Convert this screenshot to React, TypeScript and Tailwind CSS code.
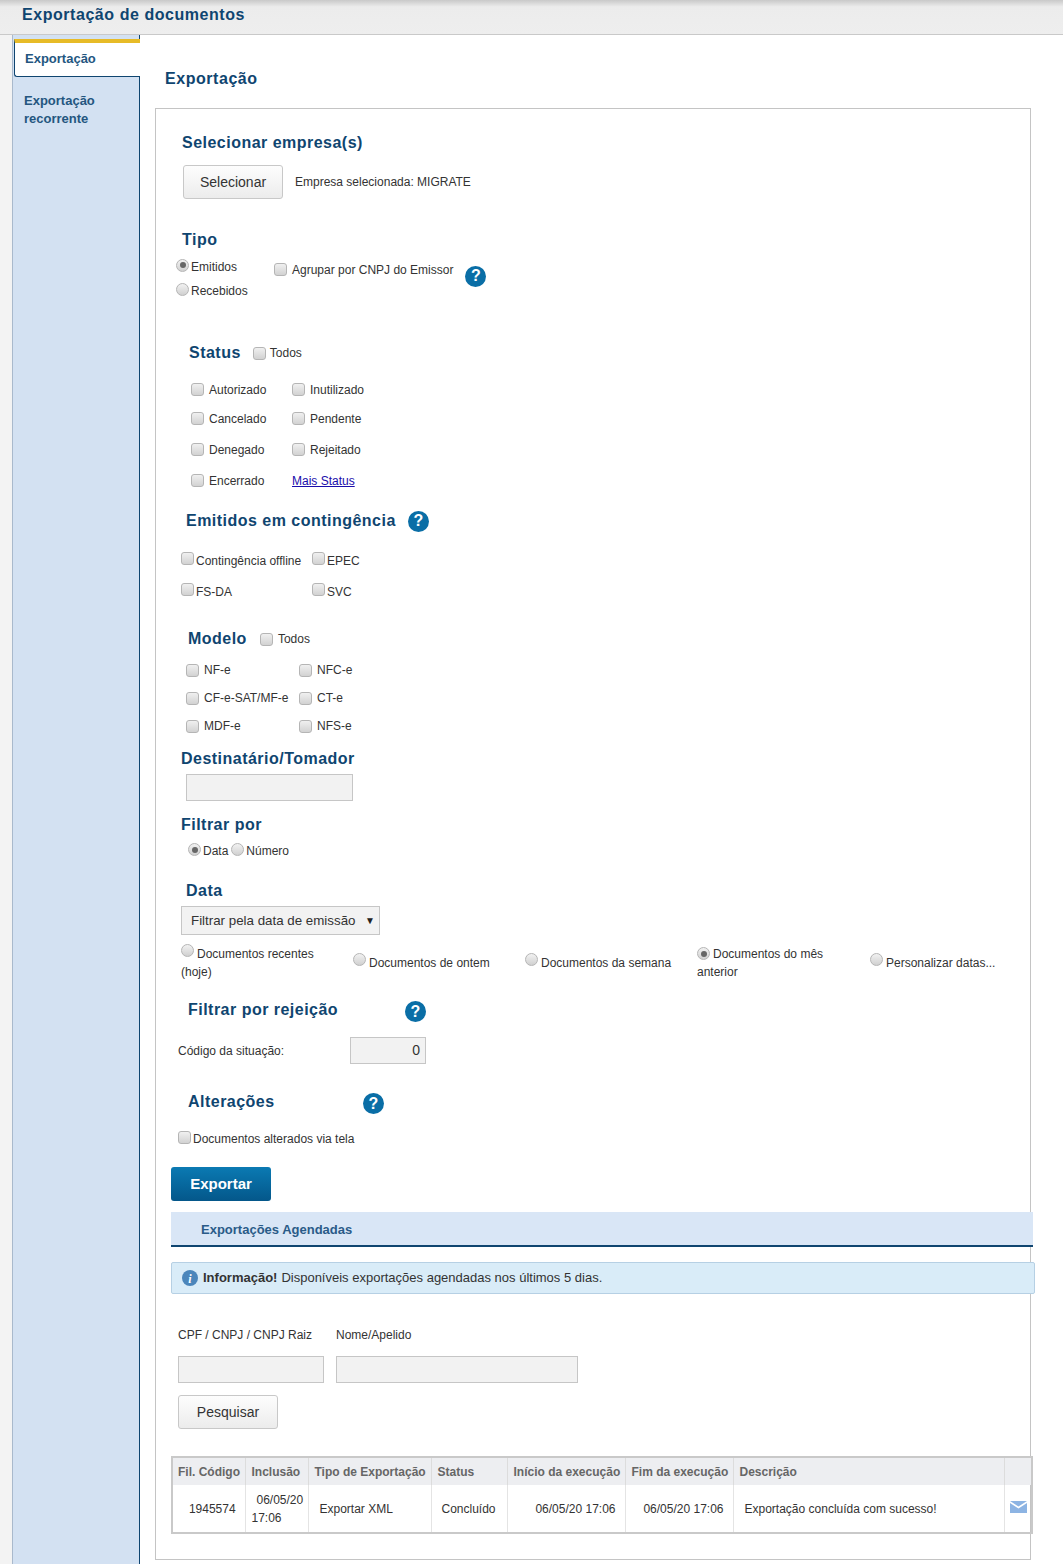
import type { ReactNode } from "react";

const FONT = "font-['Liberation_Sans',Arial,sans-serif]";

function Heading({ children, className = "" }: { children: ReactNode; className?: string }) {
  return <h2 className={`text-[16px] leading-[24px] font-bold tracking-[0.48px] text-[#0f4570] ${className}`}>{children}</h2>;
}

function Check({ className = "" }: { className?: string }) {
  return (
    <input
      type="checkbox"
      className={`appearance-none shrink-0 w-[13px] h-[13px] rounded-[3px] border border-[#b5b5b5] bg-gradient-to-b from-[#f0f0f0] to-[#d2d2d2] ${className}`}
    />
  );
}

function Radio({ checked = false, className = "" }: { checked?: boolean; className?: string }) {
  return (
    <span className={`inline-flex items-center justify-center shrink-0 w-[13px] h-[13px] rounded-full border border-[#b5b5b5] bg-gradient-to-b from-[#f2f2f2] to-[#d0d0d0] ${className}`}>
      {checked && <span className="w-[6px] h-[6px] rounded-full bg-[#666]" />}
    </span>
  );
}

function Help({ className = "" }: { className?: string }) {
  return (
    <span className={`flex items-center justify-center w-[21px] h-[21px] rounded-full bg-[#0a6ea6] text-white text-[16px] font-bold leading-none ${className}`}>?</span>
  );
}

function GrayButton({ children, className = "" }: { children: ReactNode; className?: string }) {
  return (
    <button className={`w-[100px] h-[34px] rounded-[3px] border border-[#c8c8c8] bg-gradient-to-b from-[#fdfdfd] to-[#ececec] text-[14px] text-[#333] ${className}`}>
      {children}
    </button>
  );
}

function TextBox({ className = "" }: { className?: string }) {
  return <div className={`h-[27px] border border-[#c6c6c6] bg-[#f2f2f2] ${className}`} />;
}

// one line of a two column checkbox list
function CheckRow({ h, a, b, second }: { h: string; a: string; b?: string; second?: ReactNode }) {
  return (
    <div className={`flex items-center ${h}`}>
      <div className="flex items-center w-[101px]">
        <Check />
        <span className="ml-[5px]">{a}</span>
      </div>
      {second ?? (
        <div className="flex items-center">
          <Check />
          <span className="ml-[5px]">{b}</span>
        </div>
      )}
    </div>
  );
}

function ModelRow({ a, b }: { a: string; b: string }) {
  return (
    <div className="flex items-center h-[28px] pl-[30px]">
      <div className="flex items-center w-[113px]">
        <Check />
        <span className="ml-[5px]">{a}</span>
      </div>
      <Check />
      <span className="ml-[5px]">{b}</span>
    </div>
  );
}

function ContRow({ a, b, h }: { a: string; b: string; h: string }) {
  return (
    <div className={`flex items-center pl-[25px] ${h}`}>
      <div className="flex items-center w-[131px]">
        <Check className="-mt-[5px]" />
        <span className="ml-[2px]">{a}</span>
      </div>
      <Check className="-mt-[5px]" />
      <span className="ml-[2px]">{b}</span>
    </div>
  );
}

const dateOptions = [
  { text: "Documentos recentes (hoje)", checked: false },
  { text: "Documentos de ontem", checked: false },
  { text: "Documentos da semana", checked: false },
  { text: "Documentos do mês anterior", checked: true },
  { text: "Personalizar datas...", checked: false },
];

const columns = [
  { label: "Fil. Código", w: "w-[73px]" },
  { label: "Inclusão", w: "w-[63px]" },
  { label: "Tipo de Exportação", w: "w-[123px]" },
  { label: "Status", w: "w-[76px]" },
  { label: "Início da execução", w: "w-[118px]" },
  { label: "Fim da execução", w: "w-[108px]" },
  { label: "Descrição", w: "w-[271px]" },
  { label: "", w: "" },
];

function SchedulesTable() {
  return (
    <table className="table-fixed border-collapse w-[862px] ml-[15px] mt-[27px] border-2 border-[#c9c9c9] text-[12px] text-[#333]">
      <thead>
        <tr className="h-[28px] bg-[#edeef1] text-[#666]">
          {columns.map((c) => (
            <th key={c.label} className={`${c.w} border-l border-[#dcdcdc] first:border-l-0 first:pl-[5px] pl-[6px] text-left font-bold whitespace-nowrap`}>
              {c.label}
            </th>
          ))}
        </tr>
      </thead>
      <tbody>
        <tr className="h-[48px]">
          <td className="text-center pl-[7px]">1945574</td>
          <td className="border-l border-[#e4e4e4] px-[6px] leading-[18px]">
            <span className="pl-[5px]">06/05/20</span> 17:06
          </td>
          <td className="border-l border-[#e4e4e4] pl-[11px]">Exportar XML</td>
          <td className="border-l border-[#e4e4e4] pl-[10px]">Concluído</td>
          <td className="border-l border-[#e4e4e4] pr-[9px] text-right">06/05/20 17:06</td>
          <td className="border-l border-[#e4e4e4] pr-[9px] text-right">06/05/20 17:06</td>
          <td className="border-l border-[#e4e4e4] pl-[11px]">Exportação concluída com sucesso!</td>
          <td className="border-l border-[#e4e4e4] pl-[5px]">
            <svg viewBox="0 0 17 12" className="w-[17px] h-[12px] -mt-[4px]">
              <path d="M0 0h17L8.5 5.5z" fill="#8db4e3" />
              <path d="M0 2l8.5 5.5L17 2v10H0z" fill="#8db4e3" />
            </svg>
          </td>
        </tr>
      </tbody>
    </table>
  );
}

export default function App() {
  return (
    <div className={`${FONT} w-[1063px] h-[1564px] overflow-hidden bg-white text-[12px] text-[#333]`}>
      <header className="h-[35px] border-b border-[#c9c9c9] bg-gradient-to-b from-[#c9c9c9] via-[#ececec] via-[20%] to-[#eeeeee] pl-[22px] pt-[4px]">
        <h1 className="text-[16px] leading-[22px] font-bold tracking-[0.55px] text-[#0f4570]">Exportação de documentos</h1>
      </header>

      <div className="flex h-[1529px]">
        <div className="w-[12px] bg-[#f3f3f3]" />
        <aside className="w-[128px] bg-[#d3e1f2] border-l border-[#a9b9cc] border-r border-r-[#0f4570] pt-[4px] text-[13px] font-bold text-[#24567f]">
          <div className="ml-px -mr-px h-[38px] bg-white border-t-4 border-t-[#e7bb28] border-l border-b border-[#0f4570] rounded-bl-[3px] pl-[10px] leading-[32px]">Exportação</div>
          <div className="pl-[11px] pt-[15px] leading-[18px] w-[110px]">Exportação recorrente</div>
        </aside>

        <main className="flex-1 pl-[15px]">
          <h2 className="pl-[10px] pt-[32px] text-[16px] leading-[24px] font-bold tracking-[0.55px] text-[#0f4570] h-[73px]">Exportação</h2>

          <section className="w-[876px] h-[1452px] border border-[#c4c4c4] pt-[22px]">
            <Heading className="pl-[26px]">Selecionar empresa(s)</Heading>
            <div className="flex items-center pl-[27px] mt-[10px]">
              <GrayButton>Selecionar</GrayButton>
              <span className="ml-[12px]">Empresa selecionada: MIGRATE</span>
            </div>

            <Heading className="pl-[26px] mt-[29px]">Tipo</Heading>
            <div className="relative h-[88px] pl-[20px] pt-[3px]">
              <div className="flex items-center h-[24px]">
                <Radio checked className="-mt-[4px]" />
                <span className="ml-[2px]">Emitidos</span>
                <Check className="ml-[37px] mt-[5px]" />
                <span className="ml-[5px] mt-[5px]">Agrupar por CNPJ do Emissor</span>
                <Help className="ml-[12px] mt-[18px]" />
              </div>
              <div className="flex items-center h-[24px]">
                <Radio className="-mt-[4px]" />
                <span className="ml-[2px]">Recebidos</span>
              </div>
            </div>

            <div className="flex items-center pl-[33px] h-[24px] mt-[1px]">
              <Heading>Status</Heading>
              <Check className="ml-[12px]" />
              <span className="ml-[4px]">Todos</span>
            </div>
            <div className="pl-[35px] mt-[10px]">
              <CheckRow h="h-[29px]" a="Autorizado" b="Inutilizado" />
              <CheckRow h="h-[29px]" a="Cancelado" b="Pendente" />
              <CheckRow h="h-[33px]" a="Denegado" b="Rejeitado" />
              <CheckRow h="h-[29px]" a="Encerrado" second={<a className="text-[#1a0dab] underline">Mais Status</a>} />
            </div>

            <div className="flex items-center pl-[30px] h-[24px] mt-[14px]">
              <Heading>Emitidos em contingência</Heading>
              <Help className="ml-[12px]" />
            </div>
            <div className="mt-[12px]">
              <ContRow h="h-[31px]" a="Contingência offline" b="EPEC" />
              <ContRow h="h-[31px]" a="FS-DA" b="SVC" />
            </div>

            <div className="flex items-center pl-[32px] h-[24px] mt-[20px]">
              <Heading>Modelo</Heading>
              <Check className="ml-[13px]" />
              <span className="ml-[5px]">Todos</span>
            </div>
            <div className="mt-[5px]">
              <ModelRow a="NF-e" b="NFC-e" />
              <ModelRow a="CF-e-SAT/MF-e" b="CT-e" />
              <ModelRow a="MDF-e" b="NFS-e" />
            </div>

            <Heading className="pl-[25px] mt-[7px]">Destinatário/Tomador</Heading>
            <TextBox className="ml-[30px] mt-[3px] w-[167px]" />

            <Heading className="pl-[25px] mt-[12px]">Filtrar por</Heading>
            <div className="flex items-center pl-[32px] h-[20px] mt-[4px]">
              <Radio checked className="-mt-[3px]" />
              <span className="ml-[2px]">Data</span>
              <Radio className="ml-[3px] -mt-[3px]" />
              <span className="ml-[2px]">Número</span>
            </div>

            <Heading className="pl-[30px] mt-[18px]">Data</Heading>
            <div className="relative ml-[25px] mt-[3px] w-[199px] h-[29px] border border-[#c6c6c6] bg-[#f2f2f2] pl-[9px] text-[13.33px] leading-[27px] text-[#333]">
              Filtrar pela data de emissão
              <span className="absolute right-[4px] top-0 text-[10px] text-[#222]">▼</span>
            </div>

            <div className="grid grid-cols-[172px_172px_172px_173px_150px] items-center ml-[25px] mt-[9px] h-[36px] leading-[18px]">
              {dateOptions.map((o) => (
                <div key={o.text} className="pr-[12px]">
                  <Radio checked={o.checked} className="align-[1px] mr-[3px]" />
                  {o.text}
                </div>
              ))}
            </div>

            <div className="flex items-center h-[24px] pl-[32px] mt-[18px]">
              <Heading className="w-[217px]">Filtrar por rejeição</Heading>
              <Help className="mt-[3px]" />
            </div>
            <div className="flex items-center pl-[22px] h-[27px] mt-[15px]">
              <span className="w-[172px]">Código da situação:</span>
              <div className="w-[76px] h-[27px] border border-[#c6c6c6] bg-[#f2f2f2] pr-[5px] text-right leading-[25px] text-[14px]">0</div>
            </div>

            <div className="flex items-center h-[24px] pl-[32px] mt-[26px]">
              <Heading className="w-[175px]">Alterações</Heading>
              <Help className="mt-[3px]" />
            </div>
            <div className="flex items-center pl-[22px] h-[18px] mt-[16px]">
              <Check className="-mt-[3px]" />
              <span className="ml-[2px]">Documentos alterados via tela</span>
            </div>

            <button className="block ml-[15px] mt-[19px] w-[100px] h-[34px] rounded-[3px] bg-gradient-to-b from-[#0b7ab3] to-[#04578a] text-white text-[15px] font-bold">Exportar</button>

            <div className="ml-[15px] mt-[11px] w-[862px] h-[35px] bg-[#d9e6f6] border-b-2 border-[#0f4570] pl-[30px] text-[13px] font-bold leading-[36px] text-[#2a5b88]">Exportações Agendadas</div>

            <div className="flex items-center ml-[15px] mt-[15px] w-[864px] h-[32px] rounded-[2px] border border-[#b6d0e4] bg-[#d9ecf8] pl-[10px] text-[13px] text-[#333]">
              <svg viewBox="0 0 16 16" className="w-[16px] h-[16px] mr-[5px]">
                <circle cx="8" cy="8" r="8" fill="#4b86bb" />
                <text x="8" y="12.5" textAnchor="middle" fontSize="12" fontWeight="700" fontStyle="italic" fontFamily="Liberation Serif" fill="#fff">i</text>
              </svg>
              <b>Informação!</b>
              <span className="ml-[4px]">Disponíveis exportações agendadas nos últimos 5 dias.</span>
            </div>

            <div className="flex pl-[22px] mt-[32px] leading-[18px]">
              <span className="w-[158px]">CPF / CNPJ / CNPJ Raiz</span>
              <span>Nome/Apelido</span>
            </div>
            <div className="flex pl-[22px] mt-[12px]">
              <TextBox className="w-[146px]" />
              <TextBox className="ml-[12px] w-[242px]" />
            </div>
            <GrayButton className="block ml-[22px] mt-[12px]">Pesquisar</GrayButton>

            <SchedulesTable />
          </section>
        </main>
      </div>
    </div>
  );
}
